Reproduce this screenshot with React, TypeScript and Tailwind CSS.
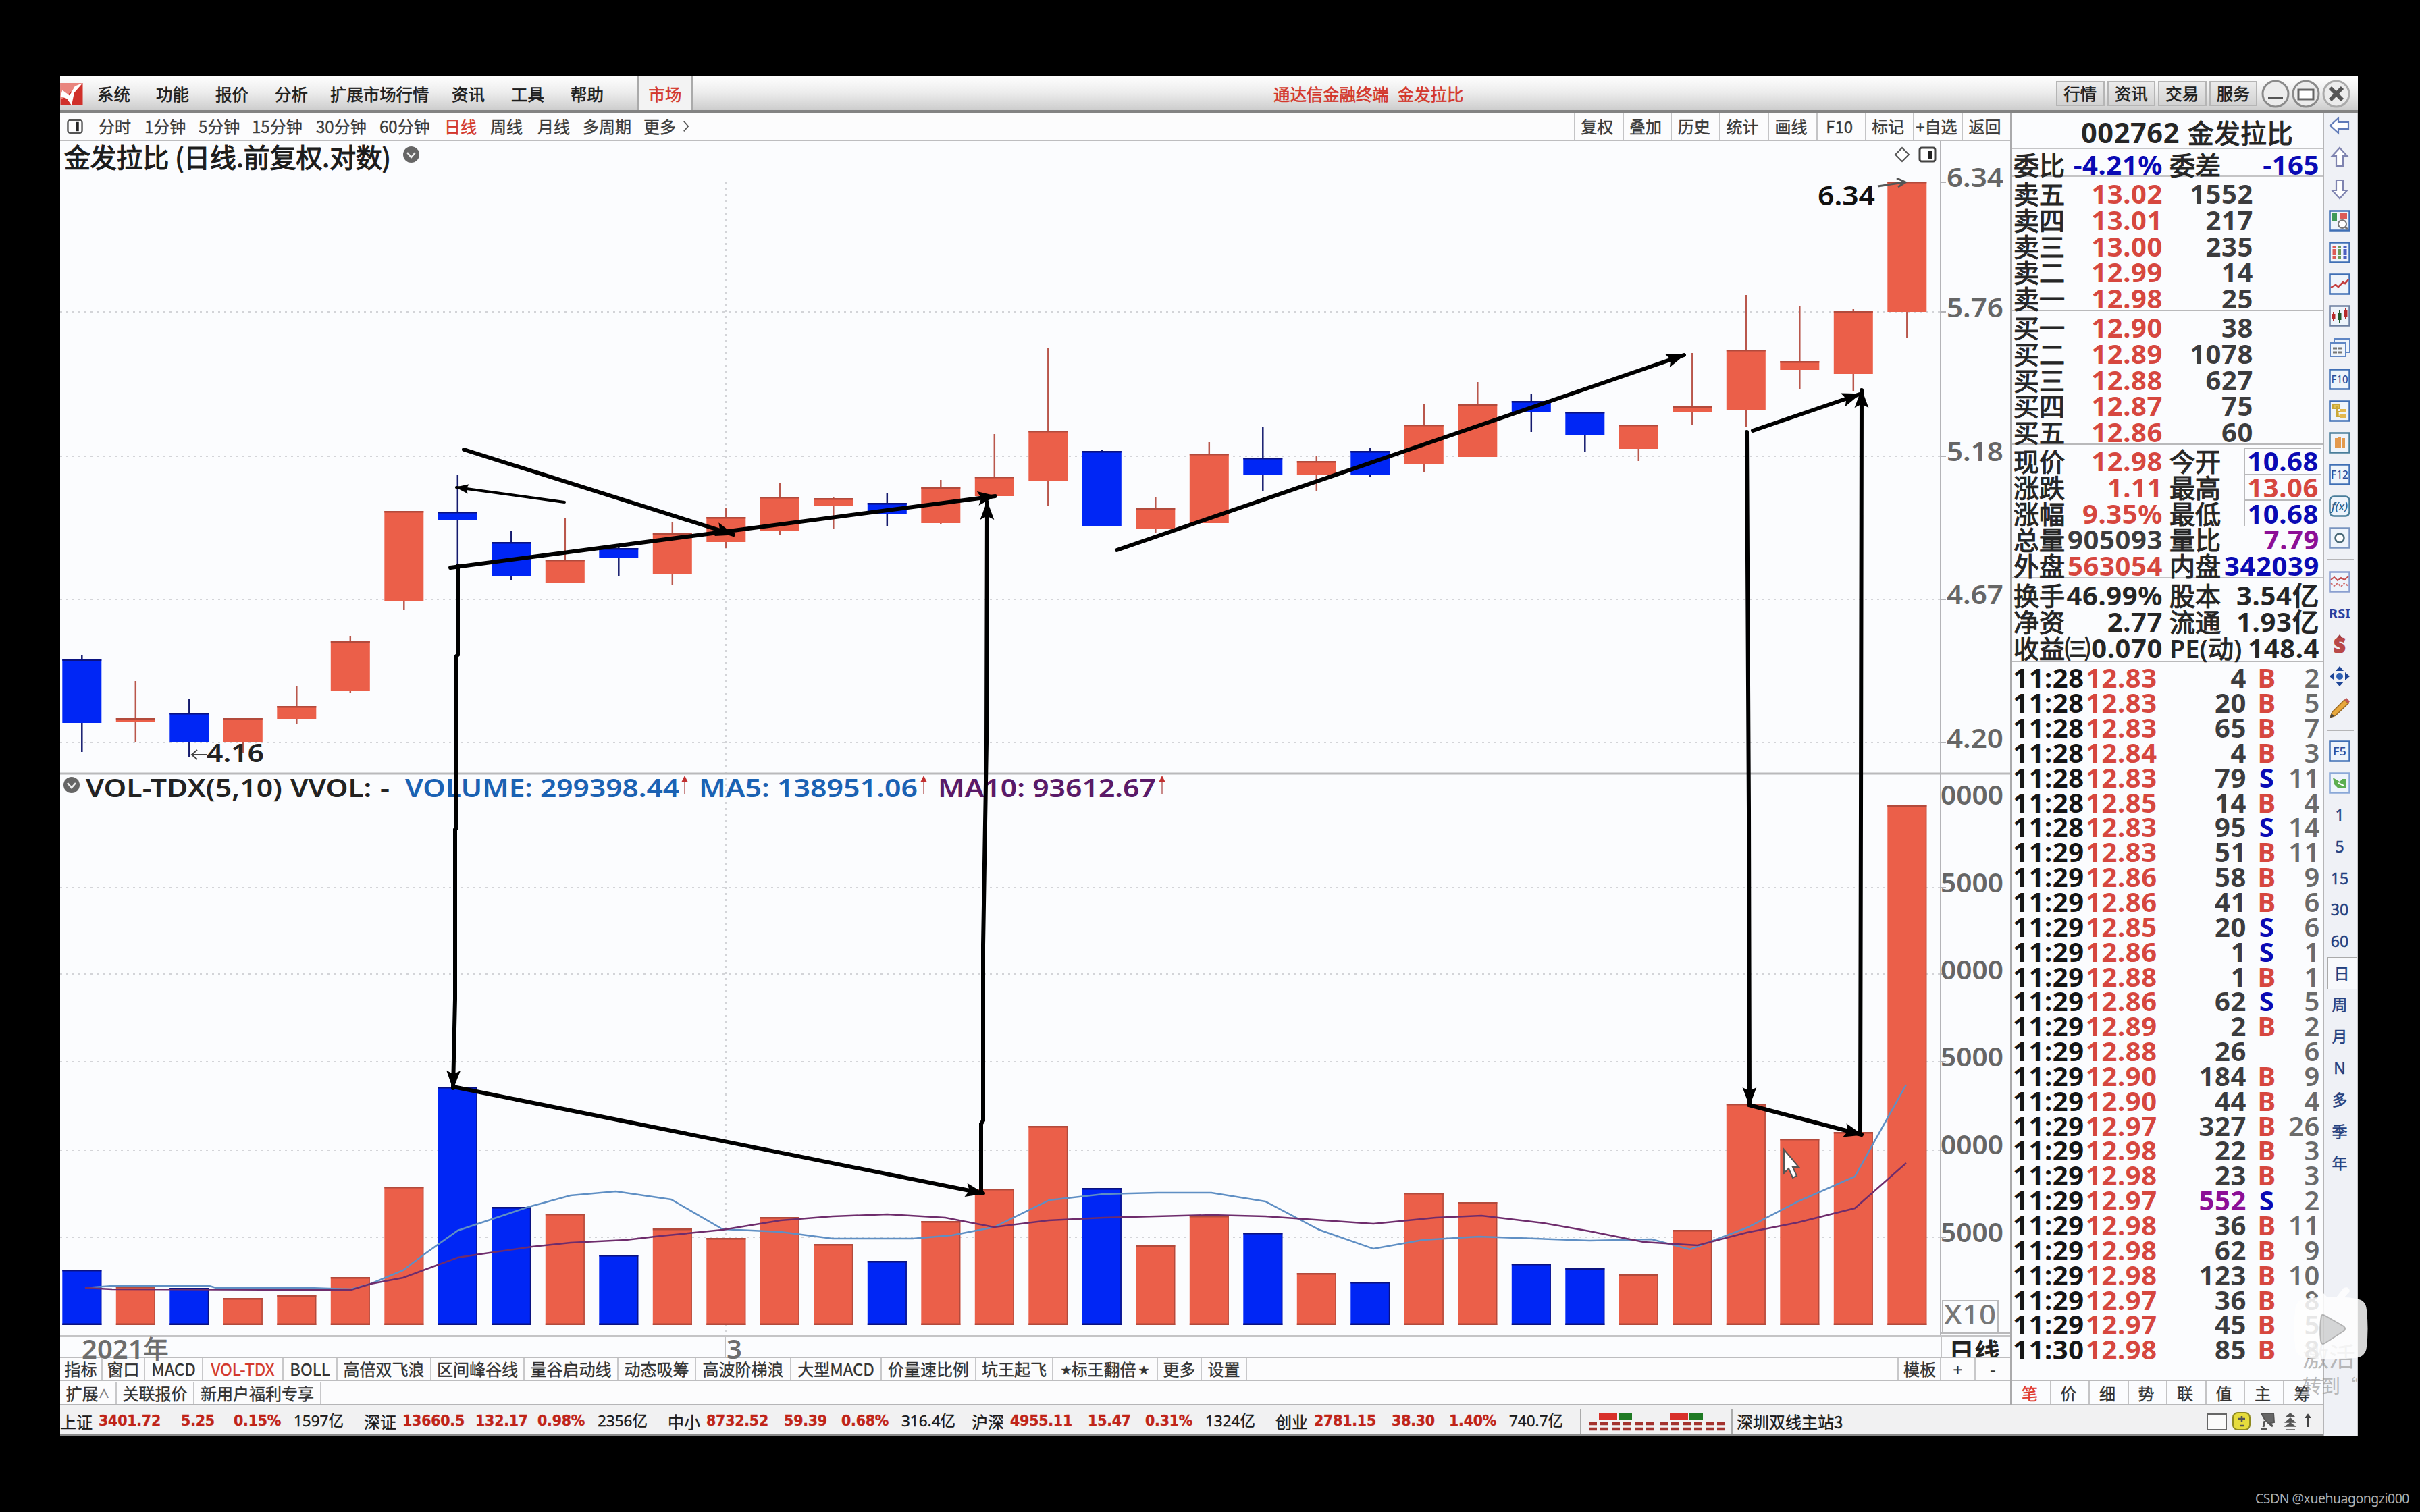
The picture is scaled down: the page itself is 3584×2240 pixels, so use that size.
import type { ReactNode } from "react";
import clsx from "clsx";

const RED = "#eb5f49";
const BLUE = "#0026f5";

// [up, high, low, top, bottom, volume top]
const CANDLES: [number, number, number, number, number, number][] = [
  [0, 971, 1114, 977, 1071, 1881],
  [1, 1009, 1100, 1064, 1070, 1906],
  [0, 1036, 1121, 1056, 1100, 1908],
  [1, 1064, 1115, 1064, 1100, 1923],
  [1, 1017, 1072, 1046, 1065, 1919],
  [1, 942, 1027, 950, 1024, 1892],
  [1, 757, 904, 757, 890, 1758],
  [0, 703, 843, 758, 770, 1610],
  [0, 787, 859, 803, 854, 1788],
  [1, 767, 863, 829, 863, 1798],
  [0, 808, 854, 812, 826, 1859],
  [1, 774, 867, 790, 851, 1820],
  [1, 753, 812, 766, 803, 1834],
  [1, 715, 792, 736, 787, 1803],
  [1, 737, 783, 738, 750, 1843],
  [0, 731, 779, 745, 762, 1868],
  [1, 711, 776, 722, 775, 1809],
  [1, 643, 737, 706, 735, 1761],
  [1, 515, 750, 638, 712, 1668],
  [0, 667, 779, 668, 779, 1760],
  [1, 737, 790, 753, 783, 1845],
  [1, 655, 775, 672, 775, 1801],
  [0, 633, 728, 678, 703, 1826],
  [1, 676, 728, 683, 703, 1886],
  [0, 663, 707, 668, 703, 1899],
  [1, 598, 699, 629, 687, 1767],
  [1, 566, 677, 599, 677, 1781],
  [0, 583, 640, 594, 611, 1872],
  [0, 610, 669, 610, 644, 1879],
  [1, 629, 683, 629, 665, 1888],
  [1, 523, 630, 602, 611, 1822],
  [1, 437, 633, 518, 607, 1635],
  [1, 453, 577, 535, 548, 1687],
  [1, 458, 580, 461, 554, 1677],
  [1, 269, 501, 269, 462, 1193],
];

const MA5 =
  "126,1908 166,1905 310,1905 320,1908 458,1908 520,1910 549,1902 597,1882 630,1857 678,1823 783,1788 845,1771 912,1765 994,1777 1070,1821 1156,1825 1233,1835 1352,1835 1410,1830 1472,1818 1554,1778 1634,1769 1714,1767 1794,1767 1874,1780 1954,1822 2034,1850 2107,1837 2190,1832 2354,1838 2446,1836 2503,1851 2587,1819 2663,1780 2747,1743 2823,1607";
const MA10 =
  "126,1908 166,1910 458,1911 520,1911 549,1902 597,1893 678,1863 711,1858 788,1847 845,1841 927,1837 979,1831 1070,1822 1156,1808 1233,1802 1314,1799 1400,1804 1472,1818 1553,1808 1634,1804 1794,1800 1874,1802 2034,1813 2126,1804 2194,1801 2286,1812 2354,1824 2434,1840 2514,1845 2587,1826 2663,1811 2747,1790 2823,1723";

type ArrowDef = { pts: [number, number][]; w?: number; head?: number };
const ARROWS: ArrowDef[] = [
  { pts: [[687, 666], [1086, 792]] },
  { pts: [[836, 744], [676, 722]], w: 4, head: 18 },
  { pts: [[667, 841], [1474, 735]] },
  { pts: [[1654, 815], [2494, 526]] },
  { pts: [[2596, 638], [2754, 584]] },
  { pts: [[678, 838], [678, 970], [676, 972], [676, 1227], [674, 1229], [674, 1480], [671, 1612]] },
  { pts: [[1453, 1766], [1453, 1665], [1456, 1660], [1456, 1400], [1461, 1100], [1462, 744]] },
  { pts: [[2587, 640], [2590, 1200], [2591, 1637]] },
  { pts: [[2755, 1680], [2756, 1200], [2757, 578]] },
  { pts: [[671, 1610], [1456, 1768]] },
  { pts: [[2590, 1637], [2757, 1681]] },
];

function Arrow({ pts, w = 6, head = 26 }: ArrowDef) {
  const [x1, y1] = pts[pts.length - 2];
  const [x2, y2] = pts[pts.length - 1];
  const deg = (Math.atan2(y2 - y1, x2 - x1) * 180) / Math.PI;
  return (
    <g>
      <polyline points={pts.map((p) => p.join(",")).join(" ")} fill="none" stroke="#000" strokeWidth={w} strokeLinecap="round" />
      <path
        d={`M2 0L${-head} ${-head * 0.4}L${-head * 0.8} 0L${-head} ${head * 0.4}Z`}
        transform={`translate(${x2} ${y2}) rotate(${deg})`}
      />
    </g>
  );
}

// text centred vertically on cy and fitted to the given width
function Label({ x, cy, w, size = 40, fill = "#222", weight = 600, children }: {
  x: number; cy: number; w: number; size?: number; fill?: string; weight?: number; children: string;
}) {
  return (
    <text x={x} y={cy + size * 0.357} fontSize={size} fontWeight={weight} fill={fill} textLength={w} lengthAdjust="spacingAndGlyphs">
      {children}
    </text>
  );
}

function DropDot({ cx, cy }: { cx: number; cy: number }) {
  return (
    <g>
      <circle cx={cx} cy={cy} r="12" fill="#666" />
      <path d={`M${cx - 6} ${cy - 3}l6 7l6 -7`} fill="none" stroke="#eee" strokeWidth="2.5" />
    </g>
  );
}

function UpMark({ x }: { x: number }) {
  return (
    <g>
      <path d={`M${x} 1176V1158`} stroke="#c98a8a" strokeWidth="2" />
      <path d={`M${x - 5} 1159L${x} 1149L${x + 5} 1159Z`} fill="#c23030" />
    </g>
  );
}

function Chart() {
  return (
    <svg
      viewBox="89 209 2888 1769"
      className="block h-[1769px] w-[2888px] bg-[#fbfcfe] font-['Noto_Sans','Noto_Sans_CJK_SC',sans-serif]"
    >
      <g stroke="#d3d4d8" strokeWidth="2" strokeDasharray="3 6">
        {[462, 676, 888, 1100, 1315, 1443, 1573, 1704, 1833].map((y) => (
          <line key={y} x1="89" x2="2874" y1={y} y2={y} />
        ))}
        <line x1="1075" x2="1075" y1="270" y2="1978" />
      </g>
      <line x1="89" x2="2977" y1="1146" y2="1146" stroke="#b9b9bb" strokeWidth="3" />
      <line x1="2874" x2="2874" y1="209" y2="1978" stroke="#b4b4b8" strokeWidth="2" />
      {[270, 462, 676, 888, 1100, 1315, 1443, 1573, 1704, 1833].map((y) => (
        <line key={y} x1="2874" x2="2882" y1={y} y2={y} stroke="#b4b4b8" strokeWidth="2" />
      ))}

      {CANDLES.map(([up, hi, lo, top, bot, vol], i) => {
        const cx = 121.3 + i * 79.5;
        const edge = up ? "#b24a3c" : "#0a1280";
        return (
          <g key={i} fill={up ? RED : BLUE}>
            <line x1={cx} x2={cx} y1={hi} y2={lo} stroke={up ? "#b9574c" : "#141a6e"} strokeWidth="2.5" />
            <rect x={cx - 29} width="58" y={top} height={bot - top} />
            <rect x={cx - 29} width="58" y={top} height="2.5" fill={edge} />
            <rect x={cx - 29} width="58" y={vol} height={1963 - vol} />
            <rect x={cx - 29} width="58" y={vol} height="2.5" fill={edge} />
            <rect x={cx - 29} width="58" y="1960.5" height="2.5" fill={edge} />
            <rect x={cx + 27.5} width="1.5" y={vol} height={1963 - vol} fill={edge} />
          </g>
        );
      })}
      <polyline points={MA5} fill="none" stroke="#5f8fc4" strokeWidth="2.5" />
      <polyline points={MA10} fill="none" stroke="#6e2c6c" strokeWidth="2.5" />

      <DropDot cx={609} cy={229} />
      <path d="M2817 219L2827 229L2817 239L2807 229Z" fill="#fff" stroke="#555" strokeWidth="2" />
      <rect x="2843" y="219" width="23" height="20" rx="3" fill="#fff" stroke="#444" strokeWidth="3" />
      <rect x="2856" y="223" width="6" height="12" fill="#222" />
      <text
        x="95"
        y="248"
        fontSize="38.5"
        fill="#1c1c1c"
        stroke="#1c1c1c"
        strokeWidth="1.2"
        textLength="484"
        lengthAdjust="spacingAndGlyphs"
        className="font-['Noto_Sans_CJK_SC',sans-serif]"
      >
        金发拉比 (日线.前复权.对数)
      </text>

      <Label x={2692} cy={290} w={85} fill="#111">6.34</Label>
      <path d="M2781 276L2820 270M2809 264L2822 270L2811 277" fill="none" stroke="#555" strokeWidth="3" />
      <Label x={306} cy={1116} w={85} size={37}>4.16</Label>
      <path d="M306 1118H285M292 1111L284 1118L292 1125" fill="none" stroke="#444" strokeWidth="2" />

      {([["6.34", 263], ["5.76", 456], ["5.18", 669], ["4.67", 881], ["4.20", 1094]] as [string, number][]).map(([t, y]) => (
        <Label key={t} x={2883} cy={y} w={84} fill="#666">{t}</Label>
      ))}
      {([["0000", 1178], ["5000", 1308], ["0000", 1437], ["5000", 1566], ["0000", 1696], ["5000", 1826]] as [string, number][]).map(([t, y]) => (
        <Label key={y} x={2874} cy={y} w={93} fill="#666">{t}</Label>
      ))}
      <path d="M2877 1927H2959V1974H2877Z" fill="none" stroke="#b9b9bb" strokeWidth="2" />
      <path d="M2874 1975H2977" stroke="#b9b9bb" strokeWidth="3" />
      <Label x={2879} cy={1948} w={77} fill="#777" weight={500}>X10</Label>

      <DropDot cx={106} cy={1163} />
      <Label x={127} cy={1168} w={291} size={37}>VOL-TDX(5,10)</Label>
      <Label x={430} cy={1168} w={120} size={37}>VVOL:</Label>
      <Label x={563} cy={1168} w={14} size={37}>-</Label>
      <Label x={600} cy={1168} w={406} size={37} fill="#1b62b3">VOLUME: 299398.44</Label>
      <UpMark x={1014} />
      <Label x={1035} cy={1168} w={324} size={37} fill="#1b62b3">MA5: 138951.06</Label>
      <UpMark x={1368} />
      <Label x={1389} cy={1168} w={323} size={37} fill="#5a1a68">MA10: 93612.67</Label>
      <UpMark x={1721} />

      {ARROWS.map((a, i) => (
        <Arrow key={i} {...a} />
      ))}
      <path
        d="M2642 1703V1738L2649 1731L2655 1745L2661 1742L2655 1729H2664Z"
        fill="#fff"
        stroke="#555"
        strokeWidth="2"
      />
    </svg>
  );
}

const MENU: [string, string][] = [
  ["系统", "w-[87px]"],
  ["功能", "w-[88px]"],
  ["报价", "w-[88px]"],
  ["分析", "w-[82px]"],
  ["扩展市场行情", "w-[180px]"],
  ["资讯", "w-[88px]"],
  ["工具", "w-[88px]"],
  ["帮助", "w-[99px]"],
];

function TitleBar() {
  return (
    <div className="flex h-[55px] w-full items-center border-b-4 border-[#838383] bg-linear-to-b from-white via-[#ececec] to-[#cdcdcd] text-[24.4px] text-[#1d1d1d] [-webkit-text-stroke:0.6px]">
      <svg viewBox="0 0 34 34" className="mt-1 mr-[21px] h-[33px] w-[34px]">
        <rect width="34" height="34" fill="#d0302a" />
        <path d="M0 0H34L0 26Z" fill="#e9857e" />
        <path d="M3 11L14 19L22 5L34 0L21 15L17 34L10 24L0 20Z" fill="#fff" />
      </svg>
      {MENU.map(([t, w]) => (
        <span key={t} className={clsx("mt-1 whitespace-nowrap", w)}>{t}</span>
      ))}
      <span className="flex h-full w-[82px] items-center justify-center border-x-2 border-[#aaa] bg-[#f3f3f3] pt-1 text-[#d3372c]">市场</span>
      <span className="mt-1 ml-[860px] whitespace-nowrap text-[#d3372c]">通达信金融终端</span>
      <span className="mt-1 ml-[13px] whitespace-nowrap text-[#d3372c]">金发拉比</span>
      <div className="mt-[2px] ml-auto flex items-center gap-1 pr-[9px]">
        {["行情", "资讯", "交易", "服务"].map((t) => (
          <span key={t} className="flex h-[37px] w-[71.5px] items-center justify-center border-2 border-[#b5b5b5] bg-linear-to-b from-[#ececec] to-[#d2d2d2]">
            {t}
          </span>
        ))}
        <svg viewBox="0 0 134 42" className="ml-[2px] h-[42px] w-[134px]" fill="#ececec" stroke="#8a8a8a" strokeWidth="3">
          <circle cx="21" cy="21" r="19" />
          <circle cx="66" cy="21" r="19" />
          <circle cx="111" cy="21" r="19" stroke="#aaa" />
          <path d="M10 27H32" stroke="#555" strokeWidth="4" />
          <rect x="55" y="15" width="22" height="14" fill="#fff" stroke="#666" />
          <path d="M102 12L120 30M120 12L102 30" stroke="#555" strokeWidth="6" />
        </svg>
      </div>
    </div>
  );
}

const PERIODS: [string, string][] = [
  ["分时", "w-[68px]"],
  ["1分钟", "w-[80px]"],
  ["5分钟", "w-[79px]"],
  ["15分钟", "w-[95px]"],
  ["30分钟", "w-[94px]"],
  ["60分钟", "w-[96px]"],
  ["日线", "w-[68px]"],
  ["周线", "w-[70px]"],
  ["月线", "w-[67px]"],
  ["多周期", "w-[90px]"],
  ["更多", "w-[57px]"],
];

const TOOLS = ["复权", "叠加", "历史", "统计", "画线", "F10", "标记", "+自选", "返回"];

function PeriodBar() {
  return (
    <div className="flex h-[42px] items-center border-b-2 border-[#bdbdbf] bg-[#fcfcfd] text-[24px] text-[#3a3a3a] [-webkit-text-stroke:0.4px]">
      <div className="flex h-full w-[49px] items-center justify-center border-r border-[#ccc] pr-1">
        <svg viewBox="0 0 26 24" className="h-[23px] w-[26px]">
          <rect x="2" y="2" width="22" height="20" rx="4" fill="none" stroke="#555" strokeWidth="2.5" />
          <path d="M17 5V19" stroke="#222" strokeWidth="4" />
        </svg>
      </div>
      <div className="flex items-center pl-[8px]">
        {PERIODS.map(([t, w]) => (
          <span key={t} className={clsx("whitespace-nowrap", w, t === "日线" && "text-[#d3372c]")}>{t}</span>
        ))}
        <svg viewBox="0 0 12 22" className="h-[18px] w-[12px]">
          <path d="M2 2L10 11L2 20" fill="none" stroke="#555" strokeWidth="2" />
        </svg>
      </div>
      <div className="ml-auto flex h-full">
        {TOOLS.map((t) => (
          <span key={t} className="flex w-[71.800px] items-center justify-center border-l-2 border-[#c4c4c6] pr-[5px] whitespace-nowrap">{t}</span>
        ))}
      </div>
    </div>
  );
}

const INDICATORS: [string, string][] = [
  ["指标", "w-[63px]"],
  ["窗口", "w-[63px]"],
  ["MACD", "w-[86px]"],
  ["VOL-TDX", "w-[119px]"],
  ["BOLL", "w-[80px]"],
  ["高倍双飞浪", "w-[139px]"],
  ["区间峰谷线", "w-[138px]"],
  ["量谷启动线", "w-[139px]"],
  ["动态吸筹", "w-[115px]"],
  ["高波阶梯浪", "w-[141px]"],
  ["大型MACD", "w-[134px]"],
  ["价量速比例", "w-[140px]"],
  ["坑王起飞", "w-[114px]"],
  ["★标王翻倍★", "w-[155px]"],
  ["更多", "w-[65px]"],
  ["设置", "w-[67px]"],
];

function BottomTabs() {
  const cell = "flex shrink-0 items-center justify-center border-r-2 border-[#c8c8ca] whitespace-nowrap";
  return (
    <>
      <div className="flex h-8 border-t-3 border-[#c4c4c6] bg-[#fbfcfe] font-['Noto_Sans','Noto_Sans_CJK_SC',sans-serif] font-semibold text-[#6d6d6d]">
        <div className="w-[984px] pl-[32px] text-[40px] leading-[34px]">
          2021<span className="text-[37px] font-normal [-webkit-text-stroke:1px]">年</span>
        </div>
        <div className="w-[1801px] border-l-2 border-[#c4c4c6] pl-[1px] text-[40px] leading-[34px]">3</div>
        <div className="h-[29px] grow overflow-hidden border-l-2 border-[#c4c4c6] pl-[10px] text-[38px] leading-[42px] font-bold text-[#222]">日线</div>
      </div>
      <div className="flex h-9 border-y-2 border-[#bdbdbf] bg-[#fcfcfd] text-[24px] text-[#333] [-webkit-text-stroke:0.4px]">
        {INDICATORS.map(([t, w]) => (
          <span key={t} className={clsx(cell, w, t === "VOL-TDX" && "text-[#d3372c]")}>
            {t.startsWith("★") ? <><span className="text-[15px]">★</span>标王翻倍<span className="pl-1 text-[15px]">★</span></> : t}
          </span>
        ))}
        <div className="ml-auto flex">
          <span className={clsx(cell, "w-[66px] border-l-4")}>模板</span>
          <span className={clsx(cell, "w-[51px]")}>+</span>
          <span className="flex w-[51px] items-center justify-center">-</span>
        </div>
      </div>
      <div className="flex h-9 border-b-2 border-[#b5b5b7] bg-[#fcfcfd] pt-px text-[24px] text-[#333] [-webkit-text-stroke:0.4px]">
        <span className={clsx(cell, "w-[84px]")}>扩展<span className="text-[17px] text-[#777]">∧</span></span>
        <span className={clsx(cell, "w-[115px]")}>关联报价</span>
        <span className={clsx(cell, "w-[188px]")}>新用户福利专享</span>
      </div>
    </>
  );
}

const SELLS = [["卖五", "13.02", "1552"], ["卖四", "13.01", "217"], ["卖三", "13.00", "235"], ["卖二", "12.99", "14"], ["卖一", "12.98", "25"]];
const BUYS = [["买一", "12.90", "38"], ["买二", "12.89", "1078"], ["买三", "12.88", "627"], ["买四", "12.87", "75"], ["买五", "12.86", "60"]];

const QUOTE = [
  ["现价", "12.98", "text-[#d6473f]", "今开", "10.68", "text-[#0a0ab4]"],
  ["涨跌", "1.11", "text-[#d6473f]", "最高", "13.06", "text-[#d6473f]"],
  ["涨幅", "9.35%", "text-[#d6473f]", "最低", "10.68", "text-[#0a0ab4]"],
  ["总量", "905093", "text-[#3c3c3e]", "量比", "7.79", "text-[#8c0f96]"],
  ["外盘", "563054", "text-[#d6473f]", "内盘", "342039", "text-[#0a0ab4]"],
];
const FUNDAMENTALS = [
  ["换手", "46.99%", "text-[#262626]", "股本", "3.54亿", "text-[#262626]"],
  ["净资", "2.77", "text-[#262626]", "流通", "1.93亿", "text-[#262626]"],
  ["收益㈢", "0.070", "text-[#262626]", "PE(动)", "148.4", "text-[#262626]"],
];

const TICKS = [
  "11:28 12.83 4 B 2", "11:28 12.83 20 B 5", "11:28 12.83 65 B 7", "11:28 12.84 4 B 3",
  "11:28 12.83 79 S 11", "11:28 12.85 14 B 4", "11:28 12.83 95 S 14", "11:29 12.83 51 B 11",
  "11:29 12.86 58 B 9", "11:29 12.86 41 B 6", "11:29 12.85 20 S 6", "11:29 12.86 1 S 1",
  "11:29 12.88 1 B 1", "11:29 12.86 62 S 5", "11:29 12.89 2 B 2", "11:29 12.88 26 - 6",
  "11:29 12.90 184 B 9", "11:29 12.90 44 B 4", "11:29 12.97 327 B 26", "11:29 12.98 22 B 3",
  "11:29 12.98 23 B 3", "11:29 12.97 552 S 2", "11:29 12.98 36 B 11", "11:29 12.98 62 B 9",
  "11:29 12.98 123 B 10", "11:29 12.97 36 B 8", "11:29 12.97 45 B 5", "11:30 12.98 85 B 8",
].map((s) => s.split(" "));

const CJK_LABEL = "text-[38px] font-normal tracking-normal [-webkit-text-stroke:1.2px]";

function DepthRow({ row }: { row: string[] }) {
  return (
    <div className="flex h-[38.7px] items-center">
      <span className={clsx("w-[100px]", CJK_LABEL)}>{row[0]}</span>
      <span className="w-[121px] text-right text-[#d6473f]">{row[1]}</span>
      <span className="w-[134px] text-right text-[#3c3c3e]">{row[2]}</span>
    </div>
  );
}

function QuoteRow({ row, boxed }: { row: string[]; boxed?: boolean }) {
  return (
    <div className="flex h-[38.7px] items-center whitespace-nowrap">
      <div className="flex w-[221px] items-center justify-between">
        <span className={clsx("w-0", CJK_LABEL)}>{row[0]}</span>
        <span className={row[2]}>{row[1]}</span>
      </div>
      <div className="flex w-[235px] items-center justify-between pl-[10px]">
        {row[3].startsWith("PE") ? (
          <span className="w-0 text-[38px] font-semibold tracking-normal">PE(<span className={CJK_LABEL}>动</span>)</span>
        ) : (
          <span className={clsx("w-0", CJK_LABEL)}>{row[3]}</span>
        )}
        <span className={clsx("flex h-[38.7px] items-center pr-[3px]", row[5], boxed && "border border-[#b9b9bb] pl-[3px]")}>{row[4]}</span>
      </div>
    </div>
  );
}

function SidePanel() {
  return (
    <div className="flex w-[463px] flex-col border-l-3 border-[#aaaaac] bg-[#fbfcfe] font-['Noto_Sans','Noto_Sans_CJK_SC',sans-serif] text-[40px] leading-none font-bold tracking-[0.6px] text-[#262626]">
      <div className="flex h-[54px] items-center gap-3 border-b-2 border-[#c4c4c6] pt-2 pl-[102px] whitespace-nowrap">
        <span className="text-[41.5px]">002762</span>
        <span className="text-[38.5px] font-normal [-webkit-text-stroke:1.2px]">金发拉比</span>
      </div>
      <div className="h-[41px] border-b-2 border-[#c4c4c6] pt-1 pl-[2px]">
        <QuoteRow row={["委比", "-4.21%", "text-[#0a0ab4]", "委差", "-165", "text-[#0a0ab4]"]} />
      </div>
      <div className="h-[199px] border-b-2 border-[#b9b9bb] pt-[6px] pl-[2px]">
        {SELLS.map((r) => <DepthRow key={r[0]} row={r} />)}
      </div>
      <div className="h-[198px] border-b-2 border-[#b9b9bb] pt-[5px] pl-[2px]">
        {BUYS.map((r) => <DepthRow key={r[0]} row={r} />)}
      </div>
      <div className="h-[198px] border-b-2 border-[#c4c4c6] pt-[5px] pl-[2px]">
        {QUOTE.map((r, i) => <QuoteRow key={r[0]} row={r} boxed={i < 3} />)}
      </div>
      <div className="h-[124px] border-b-2 border-[#b9b9bb] pt-[6px] pl-[2px]">
        {FUNDAMENTALS.map((r) => <QuoteRow key={r[0]} row={r} />)}
      </div>
      <div className="h-[1063px] pt-[5px] pl-[1px]">
        {TICKS.map(([time, price, vol, side, n], i) => (
          <div key={i} className="flex h-[36.85px] items-center">
            <span className="w-[108px] text-[#161616]">{time}</span>
            <span className="w-[107px] text-[#d6473f]">{price}</span>
            <span className={clsx("w-[131px] text-right", vol === "552" ? "text-[#8c0f96]" : "text-[#3c3c3e]")}>{vol}</span>
            <span className={clsx("w-[60px] text-center", side === "S" ? "text-[#0a0ab4]" : "text-[#d6473f]")}>{side === "-" ? "" : side}</span>
            <span className="w-[49px] text-right font-semibold text-[#6b6b6b]">{n}</span>
          </div>
        ))}
      </div>
      <div className="flex h-[38px] border-y-2 border-[#b9b9bb] font-['Noto_Sans_CJK_SC',sans-serif] text-[24px] font-normal text-[#333] [-webkit-text-stroke:0.4px]">
        {["笔", "价", "细", "势", "联", "值", "主", "筹"].map((t) => (
          <span key={t} className="flex w-[57.5px] items-center justify-center border-r-2 border-[#c4c4c6] pr-[3px] pt-[2px] first:text-[#e0382c] last:border-r-0">{t}</span>
        ))}
      </div>
    </div>
  );
}

const INDEXES = [
  ["上证", "3401.72", "5.25", "0.15%", "1597亿"],
  ["深证", "13660.5", "132.17", "0.98%", "2356亿"],
  ["中小", "8732.52", "59.39", "0.68%", "316.4亿"],
  ["沪深", "4955.11", "15.47", "0.31%", "1324亿"],
  ["创业", "2781.15", "38.30", "1.40%", "740.7亿"],
];

function Leds() {
  return (
    <svg viewBox="0 0 222 42" className="h-[42px] w-[222px]">
      {[0, 105].map((dx) => (
        <g key={dx} transform={`translate(${dx} 0)`}>
          <rect x="26" y="8" width="27" height="10" fill="#d8302a" />
          <rect x="55" y="8" width="20" height="10" fill="#1f7a24" />
          {[0, 1, 2, 3, 4, 5].map((k) => (
            <path key={k} d={`M${11 + k * 17} 24h12M${11 + k * 17} 32h12`} stroke="#a3332e" strokeWidth="4.5" />
          ))}
        </g>
      ))}
    </svg>
  );
}

function StatusBar() {
  return (
    <div className="flex h-[45px] items-center border-b-3 border-[#8a8a8a] bg-[#f1f1f2] pt-[5px] text-[24px] text-[#1a1a1a] [-webkit-text-stroke:0.4px]">
      {INDEXES.map((r) => (
        <div key={r[0]} className="flex w-[450px] items-center whitespace-nowrap">
          <span className="w-[57px]">{r[0]}</span>
          <div className="flex w-[289px] items-center font-['DejaVu_Sans',sans-serif] text-[20.5px] font-bold tracking-[-0.2px] text-[#c02418]">
            <span className="w-[94px]">{r[1]}</span>
            <span className="w-[106px] text-center">{r[2]}</span>
            <span>{r[3]}</span>
          </div>
          <span className="font-['Noto_Sans','Noto_Sans_CJK_SC',sans-serif] text-[22.5px]">{r[4]}</span>
        </div>
      ))}
      <div className="ml-[1px] flex h-[36px] items-center border-x-2 border-[#aaa]">
        <Leds />
      </div>
      <span className="pl-[6px] text-[24px]">深圳双线主站3</span>
      <svg viewBox="0 0 160 32" className="mr-[14px] ml-auto h-[32px] w-[160px]">
        <rect x="3" y="5" width="28" height="23" fill="#fafafa" stroke="#666" strokeWidth="2" />
        <rect x="41" y="3" width="25" height="25" rx="7" fill="#e6dc3c" stroke="#8f8a20" strokeWidth="2" />
        <path d="M54 8V16M49 12H59M51 22H57" stroke="#555" strokeWidth="2.5" />
        <path d="M83 4L101 4L102 17L94 19L88 13Z" fill="#666" stroke="#555" strokeWidth="2" />
        <path d="M88 15L86 24M82 27H92M95 19L100 23" fill="none" stroke="#555" strokeWidth="3" />
        <path d="M126 4L132 9H120ZM126 11L133 17H119ZM126 18L133 23H119ZM119 28H133" fill="#555" stroke="#555" strokeWidth="1.5" />
        <path d="M152 8V24M149 10L152 6L155 10Z" fill="#444" stroke="#444" strokeWidth="2" />
      </svg>
    </div>
  );
}

function Frame({ children, stroke = "#3f6fb5" }: { children?: ReactNode; stroke?: string }) {
  return (
    <svg viewBox="0 0 32 32" className="h-8 w-8" fill="none">
      <rect x="1.5" y="1.5" width="29" height="29" fill="#eef4fb" stroke={stroke} strokeWidth="2.5" />
      {children}
    </svg>
  );
}

function Glyph({ children }: { children: ReactNode }) {
  return <svg viewBox="0 0 32 32" className="h-8 w-8" fill="none">{children}</svg>;
}

function FrameText({ children, w = 24 }: { children: string; w?: number }) {
  return (
    <Frame>
      <text x={16 - w / 2} y="22" fontSize="17" fontWeight="500" textLength={w} lengthAdjust="spacingAndGlyphs" fill="#2b4f9b">{children}</text>
    </Frame>
  );
}

const ARROW_LEFT = "M2 16L14 5V11H29V21H14V27Z";

const ICONS_TOP: ReactNode[] = [
  <Glyph><path d={ARROW_LEFT} fill="#fff" stroke="#5f7ab8" strokeWidth="2.2" /></Glyph>,
  <Glyph><path d={ARROW_LEFT} fill="#fff" stroke="#7f84b0" strokeWidth="2.2" transform="rotate(90 16 16)" /></Glyph>,
  <Glyph><path d={ARROW_LEFT} fill="#fff" stroke="#7f84b0" strokeWidth="2.2" transform="rotate(-90 16 16)" /></Glyph>,
  <Frame>
    <path d="M5 4H12V16H5Z" fill="#3f9a58" />
    <path d="M17 4H27V13H17Z" fill="#dc5c58" />
    <circle cx="20" cy="21" r="6" fill="#fff" stroke="#777" strokeWidth="2" />
    <path d="M24 25L28 29" stroke="#777" strokeWidth="3" />
  </Frame>,
  <Frame>
    <path d="M8 6V26" stroke="#dc5c58" strokeWidth="5" strokeDasharray="4 1" />
    <path d="M16 6V26" stroke="#6b9a58" strokeWidth="4" strokeDasharray="4 1" />
    <path d="M24 6V26" stroke="#4a5fc0" strokeWidth="5" strokeDasharray="4 1" />
  </Frame>,
  <Frame><path d="M3 21L10 17L14 20L21 13L24 15L29 9" stroke="#c43c3c" strokeWidth="2.5" /></Frame>,
  <Frame stroke="#6d7fa0">
    <path d="M7 10V24M25 4V20" stroke="#b52a2a" strokeWidth="2" />
    <path d="M7 13V21M25 7V17" stroke="#b52a2a" strokeWidth="5" />
    <path d="M16 7V27" stroke="#1f5a2c" strokeWidth="2" />
    <path d="M16 11V22" stroke="#1f5a2c" strokeWidth="5" />
  </Frame>,
  <Glyph>
    <rect x="8" y="3" width="23" height="20" fill="#eef4fb" stroke="#5f86c4" strokeWidth="2" />
    <rect x="2" y="9" width="23" height="20" fill="#eef4fb" stroke="#5f86c4" strokeWidth="2" />
    <path d="M6 17H21M6 23H21" stroke="#777" strokeWidth="3" strokeDasharray="6 2" />
  </Glyph>,
  <FrameText w={25}>F10</FrameText>,
  <Frame>
    <path d="M6 6H16V12H6ZM13 17H16M12 8V24H16" fill="#e3c250" stroke="#c9a83a" strokeWidth="2" />
    <path d="M17 13H26V18H17ZM17 21H26V26H17Z" fill="#e3b850" />
  </Frame>,
  <Frame stroke="#4a7e9b">
    <path d="M11 9V24M16 7V24M22 9V24" stroke="#e39a4e" strokeWidth="4" />
  </Frame>,
  <FrameText w={26}>F12</FrameText>,
  <Glyph>
    <rect x="1.5" y="1.5" width="29" height="29" rx="6" fill="#eef4fb" stroke="#4a7e9b" strokeWidth="2.5" />
    <text x="16" y="22" fontSize="17" fontStyle="italic" fontWeight="500" textAnchor="middle" fill="#2b5f8b">f(x)</text>
  </Glyph>,
  <Frame stroke="#7a95c0">
    <circle cx="16" cy="16" r="6.5" stroke="#4a6a78" strokeWidth="2.5" fill="#fff" />
  </Frame>,
];

const ICONS_MID: ReactNode[] = [
  <Frame stroke="#8a9fd0">
    <path d="M3 13L8 9L13 14L18 10L23 13L29 8" stroke="#c45050" strokeWidth="2" />
    <path d="M3 18L8 22L13 18L18 23L23 18L29 22" stroke="#d07070" strokeWidth="2" strokeDasharray="3 2" />
  </Frame>,
  <span className="text-[20px] font-bold text-[#2b3fa0]">RSI</span>,
  <Glyph>
    <text x="16" y="28" fontSize="30" fontWeight="900" textAnchor="middle" fill="#b84848" stroke="#b84848" strokeWidth="1.5">S</text>
    <path d="M16 1L20 6H12Z" fill="#a04040" />
  </Glyph>,
  <Glyph>
    <path d="M16 1L22 8H10ZM16 31L22 24H10ZM1 16L8 10V22ZM31 16L24 10V22Z" fill="#1e4596" />
    <circle cx="16" cy="16" r="5" fill="#2b5fb5" />
  </Glyph>,
  <Glyph>
    <path d="M2 30L5 22L23 4L29 9L10 27Z" fill="#e8a83c" stroke="#9a6a24" strokeWidth="1.5" />
    <path d="M23 4L26 1L31 6L29 9Z" fill="#c05858" />
    <path d="M2 30L4 24L8 28Z" fill="#444" />
  </Glyph>,
];

const ICONS_LOW: ReactNode[] = [
  <FrameText w={20}>F5</FrameText>,
  <Frame stroke="#8aa8d8">
    <path d="M6 8L16 14L20 10H26V24H14L8 18Z" fill="#5cae50" />
    <path d="M14 16L22 20" stroke="#fff" strokeWidth="2" />
  </Frame>,
];

const STRIP_TEXT = ["1", "5", "15", "30", "60", "日", "周", "月", "N", "多", "季", "年"];

function ToolStrip() {
  const slot = "flex h-[46.95px] shrink-0 items-center justify-center pr-[2px]";
  return (
    <div className="flex w-[52px] flex-col border-l-2 border-r-2 border-l-[#b5b5b7] border-r-[#c8c8ca] bg-[#eff1f6] font-['Noto_Sans','Noto_Sans_CJK_SC',sans-serif]">
      <div className="-mt-1">
        {ICONS_TOP.map((n, i) => <div key={i} className={slot}>{n}</div>)}
      </div>
      <div className="mx-1 mt-2 mb-2 h-[2px] shrink-0 bg-[#b5b5b7]" />
      {ICONS_MID.map((n, i) => <div key={i} className={slot}>{n}</div>)}
      <div className="mx-1 mt-2 mb-[7px] h-[2px] shrink-0 bg-[#b5b5b7]" />
      {ICONS_LOW.map((n, i) => <div key={i} className={slot}>{n}</div>)}
      {STRIP_TEXT.map((t) => (
        <div
          key={t}
          className={clsx(slot, "text-[23px] text-[#24407f] [-webkit-text-stroke:0.5px]", t === "日" && "ml-1 border-t-2 border-l-2 border-[#aaa] bg-[#f8f9fc]")}
        >
          {t}
        </div>
      ))}
    </div>
  );
}

function VideoMark() {
  return (
    <div className="absolute top-[1922px] left-[3394px] z-10">
      <div className="absolute top-[66px] left-[16px] h-[200px] w-[81px] overflow-hidden leading-none whitespace-nowrap text-[#8f8f8f] opacity-60">
        <div className="text-[39px]">激活</div>
        <div className="mt-[11px] text-[28px]">转到“设置”</div>
      </div>
      <svg viewBox="0 0 116 110" className="absolute -top-[18px] left-0 h-[112px] w-[116px]" opacity="0.84">
        <path
          fillRule="evenodd"
          fill="#fff"
          d="M22 19Q30 17 42 17L33 9Q32 2 39 3L53 17H66L77 3Q85 0 86 8L78 17Q88 17 94 19Q110 20 111 36Q114 64 111 90Q110 105 94 107Q58 110 22 107Q6 105 5 90Q2 64 5 36Q6 20 22 19Z"
        />
        <path d="M44 44Q45 42 49 44L77 60Q81 64 77 67L49 85Q44 88 43 81Q41 62 44 44Z" fill="#d0d0d0" stroke="#a8a8a8" strokeWidth="2" />
      </svg>
    </div>
  );
}

export default function App() {
  return (
    <div className="relative h-[2240px] w-[3584px] overflow-hidden bg-black pt-[112px] pl-[89px] font-['Noto_Sans_CJK_SC',sans-serif] leading-none">
      <div className="flex h-[2015px] w-[3403px] flex-col bg-[#fbfcfe]">
        <TitleBar />
        <div className="flex h-[1960px]">
          <div className="flex w-[3351px] flex-col">
            <div className="flex h-[1915px]">
              <div className="w-[2888px]">
                <PeriodBar />
                <Chart />
                <BottomTabs />
              </div>
              <SidePanel />
            </div>
            <StatusBar />
          </div>
          <ToolStrip />
        </div>
      </div>
      <VideoMark />
      <div className="flex justify-end pt-[83px] pr-4 font-['Noto_Sans',sans-serif] text-[19.5px] tracking-[-0.5px] text-[#b0b0b0]">CSDN @xuehuagongzi000</div>
    </div>
  );
}
